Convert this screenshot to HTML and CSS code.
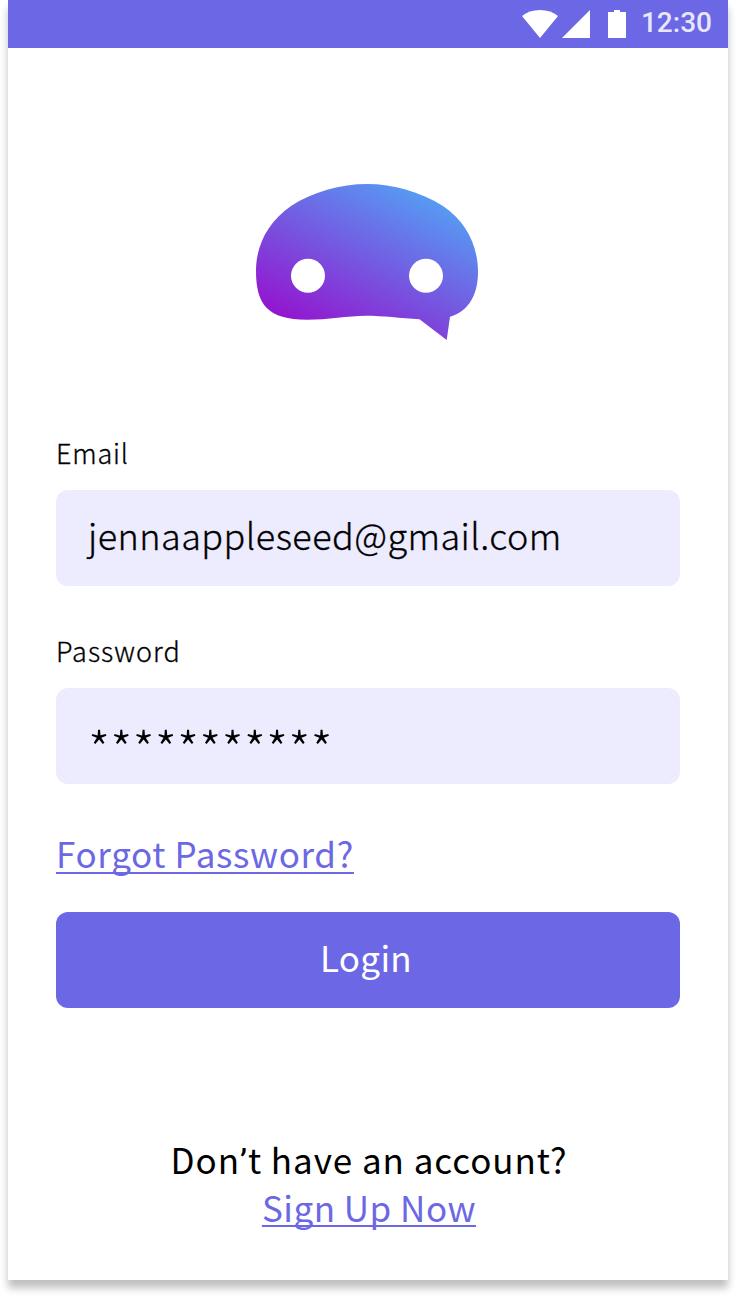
FILE: index.html
```html
<!DOCTYPE html>
<html lang="en">
<head>
<meta charset="utf-8">
<title>Login</title>
<link rel="stylesheet" href="styles.css">
</head>
<body>
<main class="screen">
  <header class="status-bar">
    <svg class="status-icons" width="106" height="30" viewBox="0 0 106 30" fill="#fff" aria-hidden="true">
      <path d="M0 7Q7 1 18 1T36 7L18 29Z"/>
      <path d="M40 29L68 1V29Z"/>
      <path d="M86 3H92V1H98V3H104V29H86Z"/>
    </svg>
    <span class="clock">12:30</span>
  </header>
  <svg class="logo" width="222" height="156" viewBox="0 0 222 156" aria-hidden="true">
    <defs>
      <linearGradient id="logo-fill" gradientUnits="userSpaceOnUse" x1="22" y1="133" x2="106" y2="-27">
        <stop offset="0" stop-color="#9414ce"/>
        <stop offset="1" stop-color="#559ef4"/>
      </linearGradient>
    </defs>
    <path fill="url(#logo-fill)" d="M111 0C137 0 165 8 187 22C211 38 222 63 222 88C222 109 214 127 194 132.7L190.7 156L163.5 135.3C145 134 126 131.7 110 131.7C92 131.7 72 135.7 51 135.7C12 135.7 0 121 0 87C0 61 12 38 35 22C56 8 85 0 111 0Z"/>
    <circle cx="52" cy="91.7" r="17" fill="#fff"/>
    <circle cx="170" cy="91.7" r="17" fill="#fff"/>
  </svg>
  <form class="form">
    <label class="label label-email">Email</label>
    <div class="field"><span class="email">jennaappleseed@gmail.com</span></div>
    <label class="label label-password">Password</label>
    <div class="field"><span class="password">***********</span></div>
    <a class="link forgot">Forgot Password?</a>
    <div class="button"><span class="login">Login</span></div>
  </form>
  <footer class="signup">
    <span class="question">Don<span class="apostrophe">’</span>t have an account?</span>
    <a class="link signup-link">Sign Up Now</a>
  </footer>
</main>
</body>
</html>
```
FILE: styles.css
```css
* { box-sizing: border-box; }
body {
  margin: 0;
  padding: 0 8px;
  height: 1296px;
  overflow: hidden;
  background: #fff;
  font-family: "Noto Sans CJK SC", "Open Sans", sans-serif;
  color: #000;
}
.screen {
  display: flex;
  flex-direction: column;
  height: 1280px;
  background: #fff;
  box-shadow: 0 8px 8px rgba(0, 0, 0, 0.25);
}
.status-bar {
  display: flex;
  justify-content: flex-end;
  flex: none;
  height: 48px;
  padding: 9px 16px 0 0;
  background: #6c68e5;
}
.clock {
  margin-left: 13px;
  font: 500 28px/28px Roboto, sans-serif;
  color: rgba(255, 255, 255, 0.86);
}
.logo { margin: 136px 0 0 248px; flex: none; }
.form {
  display: flex;
  flex-direction: column;
  align-items: flex-start;
  padding: 0 48px;
  margin-top: 93px;
}
.label {
  font-size: 27px;
  line-height: 40px;
  font-weight: 300;
  white-space: nowrap;
  -webkit-text-stroke: 0.3px #000;
}
.label-email { margin-bottom: 17px; letter-spacing: 0.8px; }
.label-password { margin: 45px 0 17px; letter-spacing: 1px; }
.field {
  display: flex;
  align-items: center;
  width: 624px;
  height: 96px;
  padding-left: 32px;
  border-radius: 12px;
  background: #edebfe;
  font-size: 36px;
  font-weight: 300;
}
.email {
  padding-bottom: 8px;
  line-height: 48px;
  letter-spacing: 0.45px;
  -webkit-text-stroke: 0.3px #000;
}
.password {
  padding-top: 22px;
  font-size: 50px;
  line-height: 48px;
  letter-spacing: 0.1px;
}
.link {
  color: #6c68e5;
  text-decoration: underline;
  text-decoration-thickness: 2px;
  text-decoration-skip-ink: none;
  text-underline-offset: 4px;
}
.forgot { margin: 45px 0 35px; font-size: 35px; line-height: 48px; letter-spacing: 0.65px; }
.button {
  display: flex;
  align-items: center;
  justify-content: center;
  width: 624px;
  height: 96px;
  padding: 0 4px 8px 0;
  border-radius: 12px;
  background: #6c68e5;
  color: #fff;
  font-size: 35px;
  letter-spacing: 0.3px;
}
.signup {
  display: flex;
  flex-direction: column;
  align-items: center;
  margin-top: 127px;
  padding-left: 2px;
  font-size: 35px;
  line-height: 48px;
}
.question { letter-spacing: 0.95px; }
.apostrophe { font-family: Roboto, sans-serif; line-height: 1; }
.signup-link { letter-spacing: 0.5px; text-underline-offset: 3px; }
```
